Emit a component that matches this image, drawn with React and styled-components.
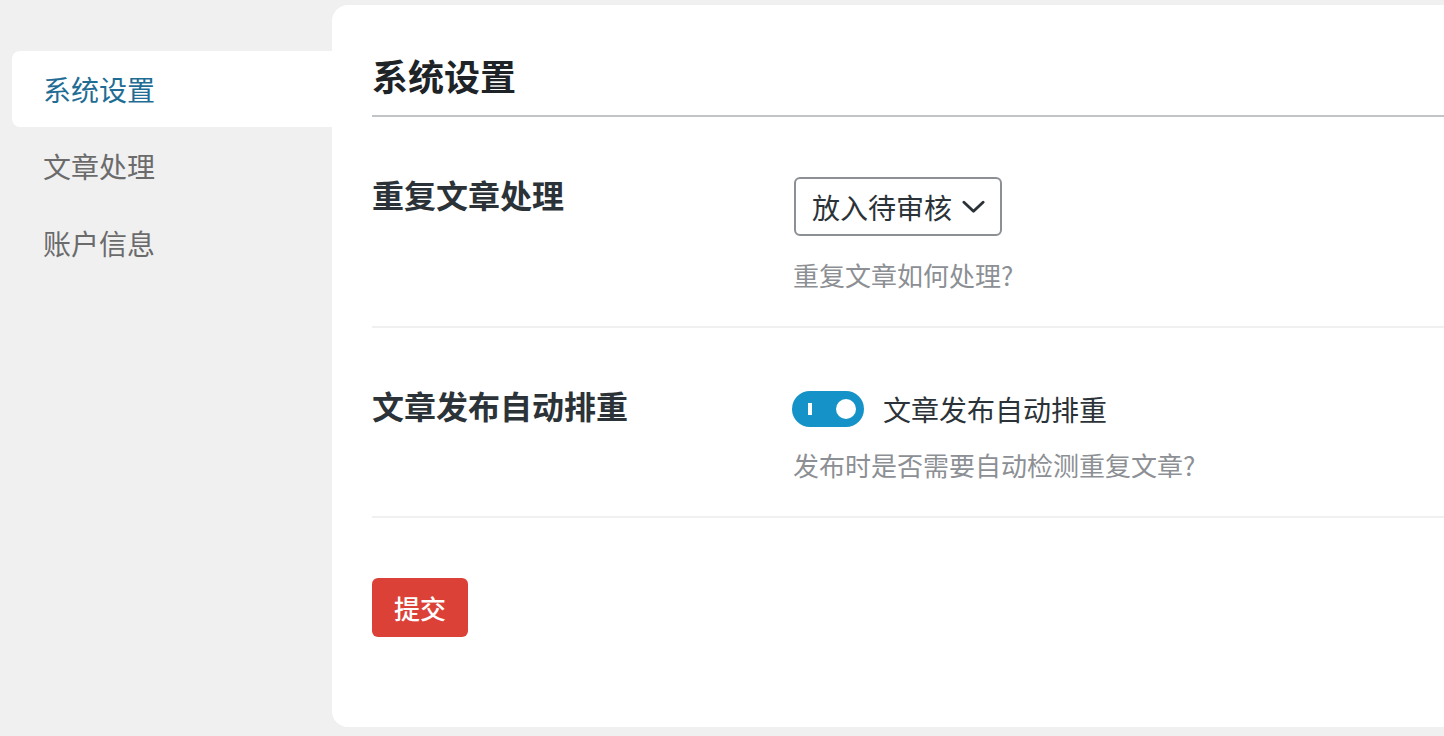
import { useState } from "react";
import styled, { createGlobalStyle } from "styled-components";

const GlobalStyle = createGlobalStyle`
  html, body {
    margin: 0;
    padding: 0;
    background: #f0f0f1;
    font-family: "Noto Sans CJK SC", "Noto Sans", sans-serif;
  }
  * {
    box-sizing: border-box;
  }
`;

const menu = ["系统设置", "文章处理", "账户信息"];

export default function App() {
  const [active, setActive] = useState(0);
  const [mode, setMode] = useState("pending");
  const [autoDedupe, setAutoDedupe] = useState(true);

  return (
    <>
      <GlobalStyle />
      <Page>
        <Sidebar>
          {menu.map((item, index) => (
            <MenuItem
              key={item}
              $active={index === active}
              onClick={() => setActive(index)}
            >
              {item}
            </MenuItem>
          ))}
        </Sidebar>

        <Panel>
          <Heading>系统设置</Heading>

          <FieldRow>
            <Label>重复文章处理</Label>
            <Value>
              <SelectWrap>
                <Select value={mode} onChange={(e) => setMode(e.target.value)}>
                  <option value="pending">放入待审核</option>
                  <option value="delete">直接删除</option>
                  <option value="ignore">不处理</option>
                </Select>
                <Chevron viewBox="0 0 24 14" aria-hidden="true">
                  <path d="M2 2 L12 11.5 L22 2" />
                </Chevron>
              </SelectWrap>
              <Description>重复文章如何处理?</Description>
            </Value>
          </FieldRow>

          <FieldRow>
            <Label>文章发布自动排重</Label>
            <Value>
              <ToggleLine>
                <Toggle
                  type="button"
                  $on={autoDedupe}
                  onClick={() => setAutoDedupe((v) => !v)}
                >
                  <ToggleMark $on={autoDedupe} />
                  <Knob $on={autoDedupe} />
                </Toggle>
                <ToggleText>文章发布自动排重</ToggleText>
              </ToggleLine>
              <Description $tight>发布时是否需要自动检测重复文章?</Description>
            </Value>
          </FieldRow>

          <SubmitButton type="button">提交</SubmitButton>
        </Panel>
      </Page>
    </>
  );
}

const Page = styled.div`
  display: flex;
  align-items: flex-start;
  min-height: 736px;
`;

const Sidebar = styled.nav`
  width: 332px;
  flex-shrink: 0;
  padding: 51px 0 0 12px;
  display: flex;
  flex-direction: column;
`;

const MenuItem = styled.div`
  display: flex;
  align-items: center;
  padding-left: 31px;
  font-size: 28px;
  line-height: 42px;
  font-weight: 400;
  cursor: pointer;
  color: ${(p) => (p.$active ? "#1f6d94" : "#6b6b6b")};
  background: ${(p) => (p.$active ? "#ffffff" : "transparent")};
  border-radius: 8px 0 0 8px;
  height: ${(p) => (p.$active ? "76px" : "77px")};
`;

const Panel = styled.main`
  flex: 1;
  margin-top: 5px;
  height: 722px;
  background: #ffffff;
  border-radius: 16px 0 0 16px;
  padding: 43px 0 0 40px;
`;

const Heading = styled.h2`
  margin: 0;
  font-size: 36px;
  line-height: 54px;
  font-weight: 700;
  color: #1d2327;
  padding-bottom: 13px;
  border-bottom: 2px solid #c3c4c7;
`;

const FieldRow = styled.div`
  display: grid;
  grid-template-columns: 421px 1fr;
  padding: 53px 0 32px;
  border-bottom: 2px solid #f0f0f1;
`;

const Label = styled.div`
  font-size: 32px;
  line-height: 48px;
  font-weight: 700;
  color: #2c3338;
`;

const Value = styled.div`
  padding-top: 7px;
  display: flex;
  flex-direction: column;
  align-items: flex-start;
`;

const SelectWrap = styled.div`
  position: relative;
  display: inline-flex;
  margin-left: 1px;
`;

const Select = styled.select`
  appearance: none;
  -webkit-appearance: none;
  height: 59px;
  width: 208px;
  padding: 0 16px;
  border: 2px solid #8c8f94;
  border-radius: 6px;
  background: #ffffff;
  font-family: "Noto Sans CJK SC", "Noto Sans", sans-serif;
  font-size: 28px;
  color: #2c3338;
  cursor: pointer;
  outline: none;
`;

const Chevron = styled.svg`
  position: absolute;
  right: 17px;
  top: 23px;
  width: 23px;
  height: 14px;
  pointer-events: none;
  fill: none;
  stroke: #2c3338;
  stroke-width: 3;
  stroke-linecap: round;
  stroke-linejoin: round;
`;

const Description = styled.p`
  margin: ${(p) => (p.$tight ? "15px" : "19px")} 0 0;
  font-size: 26px;
  line-height: 39px;
  color: #8c8f94;
`;

const ToggleLine = styled.div`
  height: 42px;
  display: flex;
  align-items: center;
  gap: 19px;
  margin-left: -1px;
`;

const Toggle = styled.button`
  position: relative;
  width: 72px;
  height: 36px;
  border: none;
  padding: 0;
  border-radius: 18px;
  background: ${(p) => (p.$on ? "#1592c8" : "#8c8f94")};
  cursor: pointer;
`;

const ToggleMark = styled.span`
  position: absolute;
  left: 16px;
  top: 12px;
  width: 4px;
  height: 12px;
  background: #ffffff;
  opacity: ${(p) => (p.$on ? 1 : 0)};
`;

const Knob = styled.span`
  position: absolute;
  top: 8px;
  left: ${(p) => (p.$on ? "44px" : "8px")};
  width: 20px;
  height: 20px;
  border-radius: 50%;
  background: #ffffff;
  transition: left 0.15s ease;
`;

const ToggleText = styled.span`
  font-size: 28px;
  line-height: 42px;
  color: #2c3338;
`;

const SubmitButton = styled.button`
  margin-top: 60px;
  height: 59px;
  padding: 0 22px;
  border: none;
  border-radius: 6px;
  background: #dc4138;
  color: #ffffff;
  font-family: "Noto Sans CJK SC", "Noto Sans", sans-serif;
  font-size: 26px;
  font-weight: 500;
  cursor: pointer;
`;
